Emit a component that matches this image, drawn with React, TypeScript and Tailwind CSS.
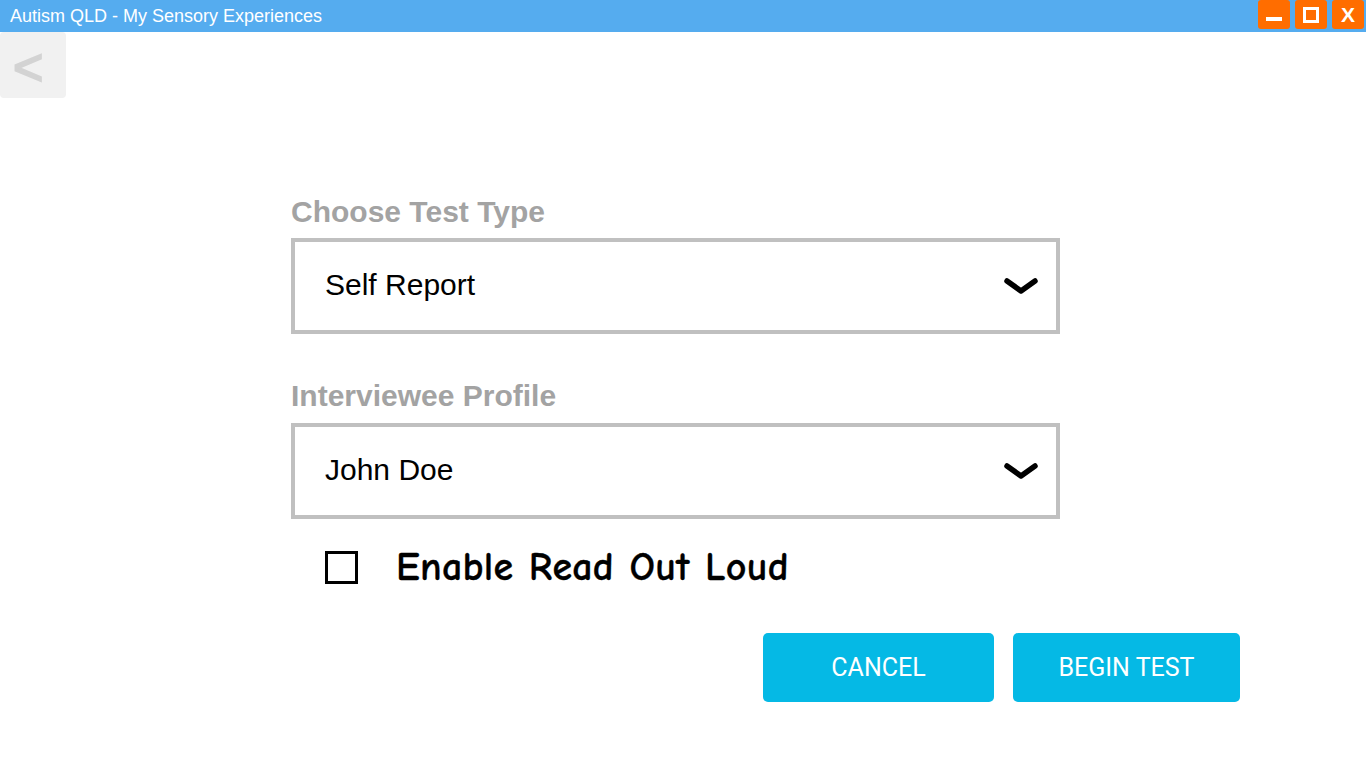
import React from "react";

function Chevron() {
  return (
    <svg width="34" height="20" viewBox="0 0 34 20" className="shrink-0">
      <path d="M3 5 L17 15 L31 5" fill="none" stroke="#000" strokeWidth="5.5" strokeLinecap="round" strokeLinejoin="round" style={{ filter: "blur(0.7px)" }} />
    </svg>
  );
}

function SelectBox({ value }: { value: string }) {
  return (
    <div className="flex h-[96px] w-[769px] items-center justify-between border-[4px] border-[#c0c0c0] bg-white pl-[30px] pr-[18px]">
      <span className="mb-[4px] text-[30px] text-black">{value}</span>
      <Chevron />
    </div>
  );
}

export default function App() {
  return (
    <div className="h-[768px] w-[1366px] overflow-hidden bg-white font-['Liberation_Sans',Arial,sans-serif]">
      {/* Title bar */}
      <div className="flex h-[32px] items-start justify-between bg-[#55acef]">
        <div className="pl-[10px] pt-[6px] text-[18px] leading-[20px] text-white">Autism QLD - My Sensory Experiences</div>
        <div className="flex gap-[5px] pr-[2px]">
          <div className="flex h-[29px] w-[32px] items-center justify-center rounded-[3px] bg-[#ff6d00]">
            <div className="mt-[8px] h-[4px] w-[16px] bg-white" />
          </div>
          <div className="flex h-[29px] w-[32px] items-center justify-center rounded-[3px] bg-[#ff6d00]">
            <div className="h-[16px] w-[16px] border-[3px] border-white" />
          </div>
          <div className="flex h-[29px] w-[32px] items-center justify-center rounded-[3px] bg-[#ff6d00] text-[21px] font-bold text-white">X</div>
        </div>
      </div>

      {/* Back button */}
      <div className="flex h-[66px] w-[66px] items-center rounded-[4px] bg-[#f1f1f1] pl-[13px] text-[52px] leading-none text-[#d3d3d3]">
        <span className="mt-[4px]" style={{ WebkitTextStroke: "2px #d3d3d3" }}>&lt;</span>
      </div>

      {/* Form */}
      <div className="ml-[291px] mt-[97px] flex flex-col">
        <div className="text-[30px] font-bold leading-[34px] text-[#a3a3a3]">Choose Test Type</div>
        <div className="mt-[9px]">
          <SelectBox value="Self Report" />
        </div>
        <div className="mt-[45px] text-[30px] font-bold leading-[34px] text-[#a3a3a3]">Interviewee Profile</div>
        <div className="mt-[10px]">
          <SelectBox value="John Doe" />
        </div>
        <div className="mt-[28px] flex items-center pl-[34px]">
          <div className="h-[33px] w-[33px] border-[3px] border-black" />
          <span className="ml-[38px] font-['Comic_Sans_MS','Comic_Neue','Lato',sans-serif] text-[40px] font-bold leading-[40px] tracking-[0.25px] text-black" style={{ WebkitTextStroke: "0.3px black", wordSpacing: "1px" }}>
            Enable Read Out Loud
          </span>
        </div>
        <div className="mt-[46px] flex w-[949px] justify-end gap-[19px]">
          <button className="h-[69px] w-[231px] rounded-[5px] bg-[#05b9e5] font-['Roboto',sans-serif] text-[25px] text-white">CANCEL</button>
          <button className="h-[69px] w-[227px] rounded-[5px] bg-[#05b9e5] font-['Roboto',sans-serif] text-[25px] text-white">BEGIN TEST</button>
        </div>
      </div>
    </div>
  );
}
